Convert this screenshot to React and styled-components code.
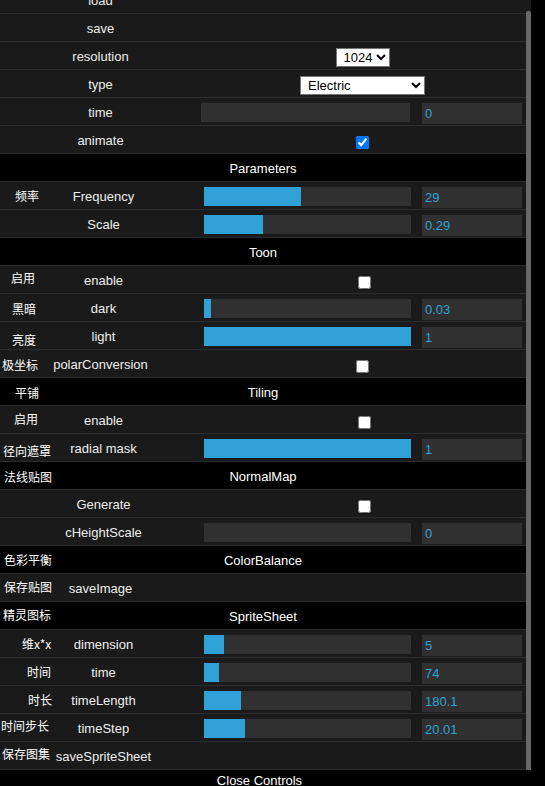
import React, { useLayoutEffect, useRef } from "react";
import styled, { createGlobalStyle } from "styled-components";

const Global = createGlobalStyle`
  html, body { margin: 0; padding: 0; background: #000; }
  body { font-family: "Liberation Sans", Arial, sans-serif; font-size: 13px; color: #eee; }
  * { box-sizing: border-box; }
`;

const Panel = styled.div`
  width: 531px;
  display: flex;
  flex-direction: column;
`;

const Body = styled.div`
  display: flex;
  height: 770px;
`;

const Viewport = styled.div`
  width: 526px;
  height: 770px;
  overflow: hidden;
  background: #1a1a1a;
`;

const Track = styled.div`
  width: 5px;
  height: 770px;
  background: #1a1a1a;
  display: flex;
  flex-direction: column;
`;

const Thumb = styled.div`
  margin-top: 11px;
  flex: 1;
  background: #676767;
  border-radius: 2px 2px 0 0;
`;

const List = styled.div`
  width: 526px;
  display: flex;
  flex-direction: column;
`;

const Row = styled.div`
  position: relative;
  height: 28px;
  flex: none;
  display: flex;
  padding-left: ${(p) => (p.$nested ? 3 : 0)}px;
  background: ${(p) => (p.$title ? "#000" : "#1a1a1a")};
  border-bottom: 1px solid #2c2c2c;
`;

const Title = styled.div`
  flex: 1;
  text-align: center;
  line-height: 27px;
  padding-top: 1px;
  color: #fff;
`;

const Name = styled.div`
  width: 201px;
  flex: none;
  text-align: center;
  line-height: 27px;
  padding-top: 1px;
  color: #eee;
  white-space: nowrap;
`;

const Note = styled.span`
  position: absolute;
  left: ${(p) => p.$x}px;
  top: ${(p) => p.$dy || 0}px;
  line-height: 27px;
  font-family: "Noto Sans CJK SC", sans-serif;
  font-size: 12px;
  color: #fff;
  white-space: nowrap;
`;

const Control = styled.div`
  flex: 1;
  display: flex;
  align-items: flex-start;
  justify-content: ${(p) => (p.$center ? "center" : "flex-start")};
  padding-right: 4px;
`;

const Slider = styled.div`
  width: ${(p) => (p.$nested ? 207 : 209)}px;
  height: 19px;
  margin-top: 5px;
  background: #303030;
`;

const SliderFill = styled.div`
  height: 100%;
  background: #2fa1d6;
`;

const NumberBox = styled.div`
  width: 100px;
  height: 21px;
  margin-top: 5px;
  margin-left: auto;
  padding-left: 3px;
  padding-top: 1px;
  background: #303030;
  color: #2fa1d6;
  line-height: 20px;
  font-size: 13px;
`;

const Select = styled.select`
  width: ${(p) => p.$w}px;
  height: 19px;
  margin-top: 6px;
  margin-left: 2px;
  font-family: "Liberation Sans", Arial, sans-serif;
  font-size: 13px;
  color: #000;
  background: #fff;
  border: 1px solid #767676;
  border-radius: 0;
  padding: 0 0 0 3px;
`;

const Check = styled.input`
  width: 13px;
  height: 13px;
  margin: 10px 0 0 ${(p) => (p.$nested ? 2 : 1)}px;
  accent-color: #0075ff;
`;

const CloseButton = styled.div`
  width: 519px;
  height: 22px;
  line-height: 22px;
  text-align: center;
  background: #000;
  color: #fff;
`;

const rows = [
  { t: "fn", name: "load" },
  { t: "fn", name: "save" },
  { t: "select", name: "resolution", value: "1024", options: ["256", "512", "1024", "2048"], w: 54 },
  { t: "select", name: "type", value: "Electric", options: ["Electric", "Fire", "Water", "Smoke"], w: 125 },
  { t: "num", name: "time", value: "0", fill: 0 },
  { t: "bool", name: "animate", checked: true },
  { t: "title", name: "Parameters" },
  { t: "num", name: "Frequency", value: "29", fill: 46.8, nested: true, note: "频率", nx: 15 },
  { t: "num", name: "Scale", value: "0.29", fill: 28.4, nested: true },
  { t: "title", name: "Toon" },
  { t: "bool", name: "enable", nested: true, note: "启用", nx: 11, ndy: -2 },
  { t: "num", name: "dark", value: "0.03", fill: 3.4, nested: true, note: "黑暗", nx: 12, ndy: 1 },
  { t: "num", name: "light", value: "1", fill: 100, nested: true, note: "亮度", nx: 12, ndy: 4 },
  { t: "bool", name: "polarConversion", note: "极坐标", nx: 2, ndy: 1 },
  { t: "title", name: "Tiling", note: "平铺", nx: 15, ndy: 1 },
  { t: "bool", name: "enable", nested: true, note: "启用", nx: 14, ndy: -1 },
  { t: "num", name: "radial mask", value: "1", fill: 100, nested: true, note: "径向遮罩", nx: 3, ndy: 3 },
  { t: "title", name: "NormalMap", note: "法线贴图", nx: 4, ndy: 1 },
  { t: "bool", name: "Generate", nested: true },
  { t: "num", name: "cHeightScale", value: "0", fill: 0, nested: true },
  { t: "title", name: "ColorBalance", note: "色彩平衡", nx: 4, ndy: 0 },
  { t: "fn", name: "saveImage", note: "保存贴图", nx: 4, ndy: -1 },
  { t: "title", name: "SpriteSheet", note: "精灵图标", nx: 3, ndy: -1 },
  { t: "num", name: "dimension", value: "5", fill: 9.7, nested: true, note: "维x*x", nx: 22, ndy: 0 },
  { t: "num", name: "time", value: "74", fill: 7.2, nested: true, note: "时间", nx: 27, ndy: 0 },
  { t: "num", name: "timeLength", value: "180.1", fill: 17.9, nested: true, note: "时长", nx: 28, ndy: 0 },
  { t: "num", name: "timeStep", value: "20.01", fill: 19.8, nested: true, note: "时间步长", nx: 1, ndy: -2 },
  { t: "fn", name: "saveSpriteSheet", nested: true, note: "保存图集", nx: 2, ndy: -2 },
];

function RowView({ r }) {
  const note = r.note ? (
    <Note $x={r.nx} $dy={r.ndy}>
      {r.note}
    </Note>
  ) : null;

  if (r.t === "title") {
    return (
      <Row $title>
        {note}
        <Title>{r.name}</Title>
      </Row>
    );
  }

  let control = null;
  if (r.t === "num") {
    control = (
      <Control>
        <Slider $nested={r.nested}>
          <SliderFill style={{ width: `${r.fill}%` }} />
        </Slider>
        <NumberBox>{r.value}</NumberBox>
      </Control>
    );
  } else if (r.t === "bool") {
    control = (
      <Control $center>
        <Check type="checkbox" $nested={r.nested} defaultChecked={!!r.checked} />
      </Control>
    );
  } else if (r.t === "select") {
    control = (
      <Control $center>
        <Select $w={r.w} defaultValue={r.value}>
          {r.options.map((o) => (
            <option key={o} value={o}>
              {o}
            </option>
          ))}
        </Select>
      </Control>
    );
  } else {
    control = <Control />;
  }

  return (
    <Row $nested={r.nested}>
      {note}
      <Name>{r.name}</Name>
      {control}
    </Row>
  );
}

export default function App() {
  const ref = useRef(null);
  useLayoutEffect(() => {
    if (ref.current) ref.current.scrollTop = 14;
  }, []);
  return (
    <>
      <Global />
      <Panel>
        <Body>
          <Viewport ref={ref}>
            <List>
              {rows.map((r, i) => (
                <RowView key={i} r={r} />
              ))}
            </List>
          </Viewport>
          <Track>
            <Thumb />
          </Track>
        </Body>
        <CloseButton>Close Controls</CloseButton>
      </Panel>
    </>
  );
}
